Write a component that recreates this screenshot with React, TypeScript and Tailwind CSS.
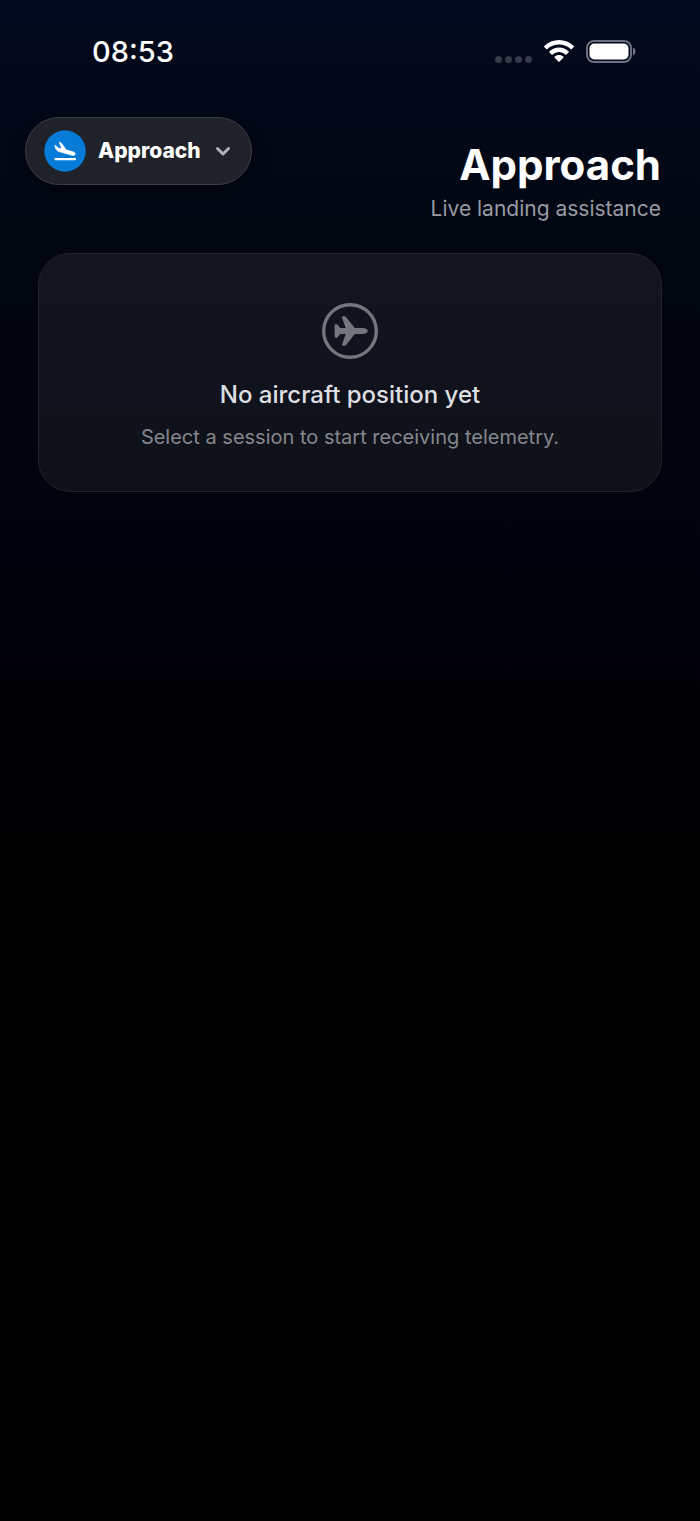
import React from 'react';

const StatusBar: React.FC = () => (
  <div className="flex h-[103px] items-center justify-between pr-16 pl-[92px] text-white">
    <span className="text-[29px] leading-9 font-medium">08:53</span>
    <div className="flex items-center gap-3">
      {/* No signal dots */}
      <div className="flex gap-[3px] pt-4">
        <span className="size-[7px] rounded-full bg-[#383b49]" />
        <span className="size-[7px] rounded-full bg-[#383b49]" />
        <span className="size-[7px] rounded-full bg-[#383b49]" />
        <span className="size-[7px] rounded-full bg-[#383b49]" />
      </div>
      <svg className="h-[23px] w-[30px]" viewBox="0 0 30 23" fill="currentColor">
        <path d="M15 0C9.300 0 4.100 2.200.3 5.900c-.4.400-.4.900 0 1.200l1.900 1.900c.3.300.8.300 1.200 0C6.400 6.100 10.500 4.500 15 4.500s8.600 1.600 11.600 4.500c.4.300.9.300 1.200 0l1.900-1.900c.4-.3.400-.8 0-1.200C25.900 2.200 20.700 0 15 0z" />
        <path d="M15 7.500c-3.700 0-7 1.400-9.500 3.700-.4.300-.4.900 0 1.200l2 2c.3.300.8.300 1.200 0 1.700-1.500 3.900-2.400 6.300-2.400s4.600.9 6.300 2.400c.4.300.9.300 1.200 0l2-2c.4-.3.400-.9 0-1.200-2.500-2.300-5.800-3.700-9.500-3.700z" />
        <path d="M15 15c-1.700 0-3.200.6-4.300 1.600-.4.300-.4.900 0 1.200l3.700 3.800c.4.400.8.400 1.200 0l3.700-3.800c.4-.3.400-.9 0-1.200C18.200 15.600 16.700 15 15 15z" />
      </svg>
      <svg className="h-[23px] w-[50px]" viewBox="0 0 50 23">
        <rect x="1" y="1" width="44" height="21" rx="7" fill="none" stroke="#6d7080" strokeWidth="2" />
        <rect x="3.500" y="3.500" width="39" height="16" rx="4.800" fill="white" />
        <path d="M47 7.500c1.600.6 2.500 2.200 2.500 4s-.9 3.400-2.500 4z" fill="#6d7080" />
      </svg>
    </div>
  </div>
);

const LandingIcon: React.FC = () => (
  <svg className="size-[42px] shrink-0" viewBox="0 0 42 42">
    <circle cx="21" cy="21" r="20.700" fill="#067bd8" />
    <path
      d="M10.800 15.600l1.500.4 1.800 2.100 4 .9-2.700-6.500 1.700.5 5.200 7.100 6.200 1.600c1.800.5 2.900 1.400 2.600 2.500-.3 1.100-1.700 1.300-3.500.9l-12.200-3.500c-1.800-.5-2.900-1.300-3.400-2.500z"
      fill="white"
      stroke="white"
      strokeWidth="0.900"
      strokeLinejoin="round"
    />
    <path d="M11.500 29.200h19.500" stroke="white" strokeWidth="2.200" strokeLinecap="round" />
  </svg>
);

const PlaneCircleIcon: React.FC = () => (
  <svg className="size-14" viewBox="0 0 56 56">
    <circle cx="28" cy="28" r="26.300" fill="none" stroke="#74767d" strokeWidth="3.400" />
    <path
      d="M45.800 28c0 1.600-2.300 3-5 3h-8L24.200 41.800c-.5.700-1.100 1-1.900 1h-1.500c-.7 0-1-.5-.8-1.200L23.700 31h-5.500l-2.600 3.200c-.3.400-.7.600-1.200.6h-1c-.5 0-.8-.3-.8-.8V22c0-.5.300-.8.800-.8h1c.5 0 .9.200 1.200.6l2.600 3.200h5.500L20 14.400c-.2-.7.100-1.200.8-1.200h1.500c.8 0 1.400.3 1.900 1L32.800 25h8c2.700 0 5 1.400 5 3z"
      fill="#74767d"
    />
  </svg>
);

export default function App() {
  return (
    <div className="min-h-screen bg-[linear-gradient(to_bottom,#030a1e_0%,#010611_16%,#01020c_36%,#000003_50%,#000000_65%)] font-[Inter,sans-serif]">
      <StatusBar />

      {/* Header */}
      <header className="flex items-start justify-between pr-[39px] pl-[25px]">
        <button
          type="button"
          className="mt-[14px] flex h-[68px] items-center gap-3 rounded-full border border-[#3b3e45] bg-[#1f2229] px-[18px] text-white shadow-[0_4px_16px_rgba(0,0,0,0.4)]"
        >
          <LandingIcon />
          <span className="text-[21px] leading-7 font-extrabold">Approach</span>
          <svg className="h-5 w-[20px]" viewBox="0 0 20 20" fill="none" stroke="#b1b2b6" strokeWidth="3" strokeLinecap="round" strokeLinejoin="round">
            <path d="M4.500 7.500l5.500 5.500 5.500-5.500" />
          </svg>
        </button>
        <div className="pt-9 text-right">
          <h1 className="text-[42px] leading-[52px] font-bold text-white">Approach</h1>
          <p className="mt-1 text-[21px] leading-7 text-[#999ba3]">Live landing assistance</p>
        </div>
      </header>

      {/* Empty state */}
      <main className="px-[38px] pt-[30px]">
        <section className="flex flex-col items-center rounded-[32px] border border-[#20232c] bg-linear-to-b from-[#111520] to-[#0f1118] px-6 pt-[49px] pb-10 text-center">
          <PlaneCircleIcon />
          <h2 className="mt-5 text-[24px] leading-8 font-medium text-[#dedfe3]">No aircraft position yet</h2>
          <p className="mt-3 text-[20px] leading-7 text-[#85878e]">Select a session to start receiving telemetry.</p>
        </section>
      </main>
    </div>
  );
}
